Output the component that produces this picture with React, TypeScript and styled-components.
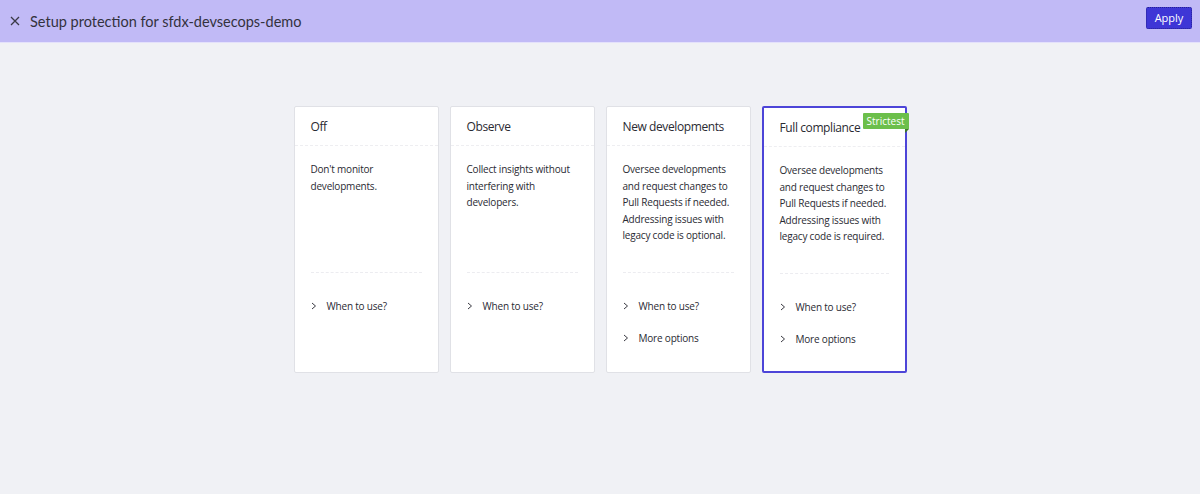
import React from "react";
import styled, { createGlobalStyle } from "styled-components";

const GlobalStyle = createGlobalStyle`
  html, body {
    margin: 0;
    padding: 0;
    background: #f0f1f5;
  }
  body {
    font-family: "Open Sans", "Liberation Sans", sans-serif;
    color: #2b2b33;
  }
`;

const Page = styled.div`
  width: 1200px;
  height: 494px;
  background: #f0f1f5;
  display: flex;
  flex-direction: column;
`;

const TopBar = styled.header`
  height: 43px;
  box-sizing: border-box;
  background: #c1baf6;
  border-bottom: 1px solid #e4e1fb;
  display: flex;
  align-items: center;
  padding: 0 8px 0 9px;
`;

const CloseButton = styled.button`
  background: none;
  border: none;
  padding: 0;
  width: 12px;
  height: 12px;
  display: flex;
  align-items: center;
  justify-content: center;
  cursor: pointer;
  margin-right: 9px;
`;

const Title = styled.h1`
  margin: 0;
  font-family: "Lato", "Liberation Sans", sans-serif;
  font-weight: 400;
  font-size: 14.5px;
  color: #33323d;
  flex: 1;
`;

const ApplyButton = styled.button`
  background: #3e36d6;
  color: #fff;
  border: 1px dotted #262094;
  border-radius: 2px;
  height: 22px;
  width: 46px;
  font-family: "Open Sans", "Liberation Sans", sans-serif;
  font-size: 11px;
  margin-top: -7px;
  cursor: pointer;
`;

const Cards = styled.main`
  display: flex;
  justify-content: center;
  gap: 11px;
  padding-top: 63px;
`;

const Card = styled.section<{ $selected?: boolean }>`
  position: relative;
  width: 145px;
  height: 267px;
  box-sizing: border-box;
  background: #fff;
  border: ${(p) => (p.$selected ? "2px solid #4d45d8" : "1px solid #e0e1e6")};
  border-radius: 2px;
  display: flex;
  flex-direction: column;
`;

const CardHeader = styled.div`
  height: 39px;
  box-sizing: border-box;
  padding: 0 10px 0 16px;
  display: flex;
  align-items: center;
  font-size: 12px;
  letter-spacing: -0.4px;
  color: #2a2a32;
  border-bottom: 1px dashed #eeeef1;
`;

const CardBody = styled.p`
  margin: 0;
  height: 126px;
  box-sizing: border-box;
  padding: 15px 10px 0 16px;
  font-size: 10px;
  letter-spacing: -0.2px;
  line-height: 16.5px;
  color: #2a2a32;
`;

const Divider = styled.hr`
  margin: 0 16px;
  border: none;
  border-top: 1px dashed #ececf0;
`;

const Options = styled.ul`
  list-style: none;
  margin: 0;
  padding: 17px 16px 0;
`;

const Option = styled.li`
  height: 32px;
  display: flex;
  align-items: center;
  font-size: 10px;
  letter-spacing: -0.2px;
  color: #2a2a32;
`;

const Chevron = styled.span`
  width: 16px;
  display: inline-flex;
  align-items: center;
`;

const Badge = styled.span`
  position: absolute;
  top: 5px;
  right: -4px;
  background: #6cbf4b;
  color: #fff;
  font-size: 10px;
  line-height: 16px;
  padding: 0 4px;
  border-radius: 1px 1px 0 1px;

  &::after {
    content: "";
    position: absolute;
    right: 0;
    bottom: -4px;
    border-top: 4px solid #3d7a27;
    border-right: 4px solid transparent;
  }
`;

type Mode = {
  name: string;
  text: string;
  options: string[];
  selected?: boolean;
  badge?: string;
};

const modes: Mode[] = [
  {
    name: "Off",
    text: "Don't monitor developments.",
    options: ["When to use?"],
  },
  {
    name: "Observe",
    text: "Collect insights without interfering with developers.",
    options: ["When to use?"],
  },
  {
    name: "New developments",
    text: "Oversee developments and request changes to Pull Requests if needed. Addressing issues with legacy code is optional.",
    options: ["When to use?", "More options"],
  },
  {
    name: "Full compliance",
    text: "Oversee developments and request changes to Pull Requests if needed. Addressing issues with legacy code is required.",
    options: ["When to use?", "More options"],
    selected: true,
    badge: "Strictest",
  },
];

const ChevronIcon = () => (
  <svg width="6" height="8" viewBox="0 0 6 8" fill="none">
    <path d="M1 1l3.5 3L1 7" stroke="#3a3a42" strokeWidth="1" />
  </svg>
);

const App = () => {
  return (
    <Page>
      <GlobalStyle />
      <TopBar>
        <CloseButton aria-label="Close">
          <svg width="10" height="10" viewBox="0 0 10 10">
            <path d="M1 1l8 8M9 1l-8 8" stroke="#3a3946" strokeWidth="1.3" />
          </svg>
        </CloseButton>
        <Title>Setup protection for sfdx-devsecops-demo</Title>
        <ApplyButton>Apply</ApplyButton>
      </TopBar>
      <Cards>
        {modes.map((m) => (
          <Card key={m.name} $selected={m.selected}>
            {m.badge && <Badge>{m.badge}</Badge>}
            <CardHeader>{m.name}</CardHeader>
            <CardBody>{m.text}</CardBody>
            <Divider />
            <Options>
              {m.options.map((o) => (
                <Option key={o}>
                  <Chevron>
                    <ChevronIcon />
                  </Chevron>
                  {o}
                </Option>
              ))}
            </Options>
          </Card>
        ))}
      </Cards>
    </Page>
  );
};

export default App;
